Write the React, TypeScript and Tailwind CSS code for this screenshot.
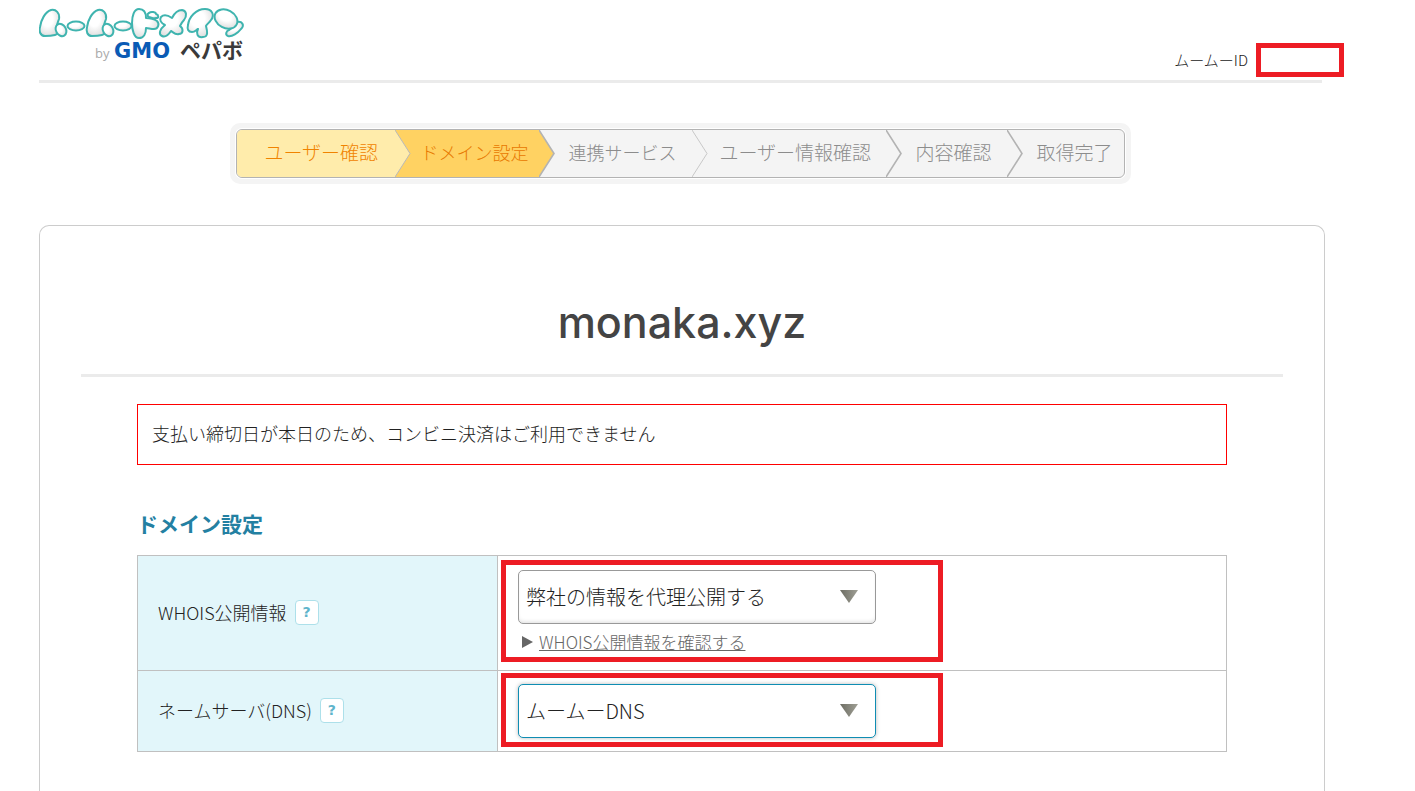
import React, { useState } from "react";

const steps = [
  { label: "ユーザー確認", box: "w-[158px] bg-[#ffecab] pl-7 text-[19px] text-[#f08300]", left: "#ffecab", right: "#ffd262", line: "#b9b9b9", weight: 1 },
  { label: "ドメイン設定", box: "w-[128px] bg-[#ffd262] pl-[10px] text-[18px] text-[#e87800]", left: "#ffd262", right: "#f4f4f4", line: "#b3b3b3", weight: 1.6 },
  { label: "連携サービス", box: "w-[137px] pl-[14px] text-[18px] text-[#8c8c8c]", left: "#f4f4f4", right: "#f4f4f4", line: "#c8c8c8", weight: 1 },
  { label: "ユーザー情報確認", box: "w-[178px] pl-3 text-[19px] text-[#8c8c8c]", left: "#f4f4f4", right: "#f4f4f4", line: "#b3b3b3", weight: 1.6 },
  { label: "内容確認", box: "w-[105px] pl-[14px] text-[19px] text-[#8c8c8c]", left: "#f4f4f4", right: "#f4f4f4", line: "#b3b3b3", weight: 1.6 },
  { label: "取得完了", box: "w-[101px] pl-[14px] text-[19px] text-[#8c8c8c]", left: "", right: "", line: "", weight: 0 },
];

function Logo() {
  return (
    <svg width="210" height="56" viewBox="0 0 210 56" role="img" aria-label="ムームードメイン by GMOペパボ">
      <defs>
        <radialGradient id="bubble" cx="0.4" cy="0.35" r="0.7">
          <stop offset="0.4" stopColor="#ffffff" />
          <stop offset="1" stopColor="#dcdcdc" />
        </radialGradient>
        <g id="mu">
          <path d="M12 2 C17 1 21 5 20 11 C19 14 18 16 18 18 C20 22 20 26 16 27 C12 28 9 28 6 28 C1 28 0 23 1 19 C2 12 6 4 12 2 Z" />
          <ellipse cx="22" cy="22" rx="5" ry="6.5" transform="rotate(-30 22 22)" />
        </g>
        <ellipse id="bar" rx="8.5" ry="4.5" />
      </defs>
      <g fill="url(#bubble)" stroke="#3fb4af" strokeWidth="2" strokeLinejoin="round" strokeLinecap="round">
        <use href="#bar" x="37" y="18" />
        <use href="#bar" x="84" y="18" />
        <use href="#mu" />
        <use href="#mu" x="47" />
        <path d="M100 1 C105 1 107 5 107 10 C111 10 115 11 118 13 C121 16 119 21 115 21 C112 21 109 20 107 20 C107 25 105 30 100 30 C95 30 93 22 93 15 C93 8 95 1 100 1 Z" />
        <path d="M110 5 C112 3 117 4 117 6 C120 7 120 10 117 10 C114 11 112 9 110 9 C108 8 108 6 110 5 Z" />
        <path d="M122 9 C125 6 130 8 133 10 C135 6 138 2 143 2 C148 3 148 8 145 12 C143 14 142 16 141 18 C145 21 144 26 140 26 C136 27 134 24 132 23 C130 26 127 30 123 28 C119 26 121 21 126 17 C122 15 120 12 122 9 Z" />
        <path d="M149 17 C150 9 157 1 166 1 C173 1 176 7 172 12 C170 15 168 16 167 18 C168 22 170 29 164 29 C158 30 157 25 159 21 C157 22 156 24 153 24 C149 24 148 21 149 17 Z" />
        <path d="M198 14 C203 13 206 17 202 21 C199 25 193 29 189 28 C186 27 187 23 190 22 C194 20 195 16 198 14 Z" />
        <ellipse cx="187" cy="11" rx="12" ry="9" transform="rotate(28 187 11)" />
      </g>
      <text x="56" y="50" fill="#aaaaaa" fontSize="13" className="font-['Open_Sans',sans-serif]">by</text>
      <text x="75" y="50" fill="#0a5bb5" fontSize="21" fontWeight="700" className="font-['DejaVu_Sans',sans-serif]">GMO</text>
      <text x="141" y="50" fill="#3a3a3a" fontSize="21" fontWeight="700" className="font-['Noto_Sans_CJK_JP',sans-serif]">ペパボ</text>
    </svg>
  );
}

function Help({ label }: { label: string }) {
  return (
    <button
      type="button"
      aria-label={label}
      className="flex h-[25px] w-6 items-center justify-center rounded border border-[#ade0ea] bg-white font-['DejaVu_Sans',sans-serif] text-sm font-bold text-[#5fb4cb]"
    >
      ?
    </button>
  );
}

function SelectBox({ id, options, tone }: { id: string; options: string[]; tone: string }) {
  const [value, setValue] = useState(options[0]);
  return (
    <div className="relative w-[358px]">
      <select
        id={id}
        value={value}
        onChange={(e) => setValue(e.target.value)}
        className={`block h-[54px] w-full appearance-none rounded-[5px] border bg-white pl-[7px] pr-12 text-[20px] font-light text-[#222222] outline-none ${tone}`}
      >
        {options.map((o) => (
          <option key={o}>{o}</option>
        ))}
      </select>
      <svg className="pointer-events-none absolute right-[18px] top-5" width="18" height="13" viewBox="0 0 18 13" aria-hidden="true">
        <defs>
          <linearGradient id={`${id}-arrow`} x1="0" y1="0" x2="1" y2="0">
            <stop offset="0" stopColor="#6d6d63" />
            <stop offset="1" stopColor="#a0a096" />
          </linearGradient>
        </defs>
        <path d="M0 0 H18 L9 13 Z" fill={`url(#${id}-arrow)`} />
      </svg>
    </div>
  );
}

export default function App() {
  return (
    <div className="min-h-screen bg-white pl-[39px] pr-[90px] font-['Noto_Sans_CJK_JP','Liberation_Sans',sans-serif] text-[#222222]">
      <header className="mr-[3px] flex h-[83px] items-start justify-between border-b-[3px] border-[#ebebeb] pt-2">
        <a href="#top"><Logo /></a>
        <div className="-mr-[22px] mt-[35px] flex items-center gap-2">
          <span className="text-[15px] font-light">ムームーID</span>
          <span className="h-[34px] w-[88px] border-[5px] border-[#ed1c24]" />
        </div>
      </header>

      <nav className="mr-1 mt-10 flex justify-center" aria-label="手続き">
        <div className="rounded-[10px] bg-[#f4f4f4] p-[5px]">
          <div className="rounded-[7px] bg-white p-px">
            <ol className="flex h-[49px] overflow-hidden rounded-md border border-[#b3b3b3] bg-[#f4f4f4]">
              {steps.map((s, i) => (
                <li key={s.label} className="flex">
                  <span className={`flex items-center whitespace-nowrap pb-[2px] font-light ${s.box}`}>{s.label}</span>
                  {i < steps.length - 1 && (
                    <svg width="16" height="47" viewBox="0 0 16 47" aria-hidden="true">
                      <rect width="16" height="47" fill={s.right} />
                      <path d="M0 0 L15 23.5 L0 47 Z" fill={s.left} />
                      <path d="M0 0 L15 23.5 L0 47" fill="none" stroke={s.line} strokeWidth={s.weight} />
                    </svg>
                  )}
                </li>
              ))}
            </ol>
          </div>
        </div>
      </nav>

      <main className="mt-[41px] rounded-t-[10px] border border-b-0 border-[#cccccc] px-[41px] pb-10">
        <h1 className="border-b-[3px] border-[#ebebeb] pb-6 pt-[68px] text-center font-['Inter',sans-serif] text-[43px] font-medium leading-[56px] text-[#444444]">
          monaka.xyz
        </h1>

        <div className="px-14">
          <p className="mt-[27px] flex h-[61px] items-center border border-[red] px-[14px] pb-[2px] text-[18px] font-light">
            支払い締切日が本日のため、コンビニ決済はご利用できません
          </p>

          <h2 className="mt-[42px] text-[21px] font-bold leading-8 text-[#2380a2]">ドメイン設定</h2>

          <table className="mt-4 w-full table-fixed border-collapse border border-[#c0c0c0]">
            <tbody>
              <tr className="h-[115px] border-b border-[#c0c0c0]">
                <th scope="row" className="w-[360px] border-r border-[#c0c0c0] bg-[#e2f6fa] px-5 pb-[2px] text-left font-light">
                  <div className="flex items-center gap-2">
                    <label htmlFor="whois" className="text-[18px]">WHOIS公開情報</label>
                    <Help label="WHOIS公開情報のヘルプ" />
                  </div>
                </th>
                <td className="px-[3px] pb-2 pt-1 align-top">
                  <div className="h-[102px] w-[442px] border-[5px] border-[#ed1c24] px-3 pt-[5px]">
                    <SelectBox
                      id="whois"
                      options={["弊社の情報を代理公開する", "お客様の情報を公開する"]}
                      tone="border-[#999999] shadow-[inset_0_-3px_4px_-2px_#dddddd]"
                    />
                    <div className="mt-[6px] flex items-center gap-[6px] pl-1">
                      <svg width="11" height="12" viewBox="0 0 11 12" aria-hidden="true">
                        <path d="M0 0 L11 6 L0 12 Z" fill="#666666" />
                      </svg>
                      <a href="#whois-info" className="text-[17px] font-light leading-6 text-[#666666] underline">
                        WHOIS公開情報を確認する
                      </a>
                    </div>
                  </div>
                </td>
              </tr>
              <tr className="h-[81px]">
                <th scope="row" className="border-r border-[#c0c0c0] bg-[#e2f6fa] px-5 pb-[2px] text-left font-light">
                  <div className="flex items-center gap-2">
                    <label htmlFor="dns" className="text-[18px]">ネームサーバ(DNS)</label>
                    <Help label="ネームサーバ(DNS)のヘルプ" />
                  </div>
                </th>
                <td className="px-[3px] py-[2px] align-top">
                  <div className="h-[74px] w-[442px] border-[5px] border-[#ed1c24] px-3 pt-[6px]">
                    <SelectBox
                      id="dns"
                      options={["ムームーDNS", "GMOペパボ以外のネームサーバ"]}
                      tone="border-[#0f8db3] shadow-[0_0_4px_#bbbbbb]"
                    />
                  </div>
                </td>
              </tr>
            </tbody>
          </table>
        </div>
      </main>
    </div>
  );
}
